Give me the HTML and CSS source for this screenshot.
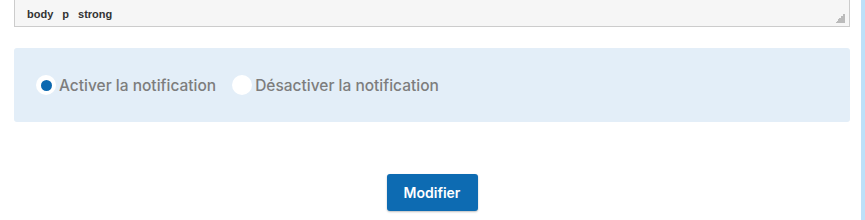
FILE: index.html
```html
<!DOCTYPE html>
<html lang="fr">

<head>
    <meta charset="UTF-8">
    <meta name="viewport" content="width=device-width, initial-scale=1.0">
    <title>Notification</title>
    <link rel="stylesheet" href="styles.css">
</head>

<body>
    <div class="page">
        <div class="content">
            <div class="editor-status">
                <div class="path">
                    <span>body</span>
                    <span>p</span>
                    <span>strong</span>
                </div>
                <div class="grip"></div>
            </div>

            <div class="notif-box">
                <label class="radio">
                    <input type="radio" name="notif" checked>
                    <span class="mark"></span>
                    Activer la notification
                </label>
                <label class="radio">
                    <input type="radio" name="notif">
                    <span class="mark"></span>
                    Désactiver la notification
                </label>
            </div>

            <div class="actions">
                <button class="btn-primary">Modifier</button>
            </div>
        </div>
        <div class="side-strip"></div>
    </div>
</body>

</html>
```

FILE: styles.css
```css
body {
    margin: 0px;
    font-family: Inter, "Noto Sans", sans-serif;
    background: #fff;
}

.page {
    display: flex;
    height: 220px;
}

.content {
    flex: 1;
    padding: 0px 11px 0px 14px;
}

.side-strip {
    width: 4px;
    background-color: #bde0f9;
}

.editor-status {
    display: flex;
    align-items: center;
    justify-content: space-between;
    height: 26px;
    margin-top: -1px;
    padding: 0px 4px 0px 12px;
    background-color: #f6f6f6;
    border: 1px solid #cccccc;
}

.editor-status .path {
    display: flex;
    gap: 9px;
    padding-top: 1px;
    font-family: "Liberation Sans", Arial, sans-serif;
    font-size: 11px;
    font-weight: bold;
    color: #333;
}

.editor-status .grip {
    width: 10px;
    height: 10px;
    margin-top: 10px;
    background: linear-gradient(to bottom right, transparent 50%, #bbbbbb 50%);
}

.notif-box {
    display: flex;
    align-items: center;
    gap: 16px;
    height: 74px;
    margin-top: 21px;
    padding: 0px 22px;
    background-color: #e3eef8;
    border-radius: 3px;
}

.radio {
    display: flex;
    align-items: center;
    gap: 3px;
    font-size: 15.5px;
    font-weight: 500;
    color: #7d7d7d;
    cursor: pointer;
}

.radio input {
    display: none;
}

.radio .mark {
    display: flex;
    align-items: center;
    justify-content: center;
    width: 20px;
    height: 20px;
    border-radius: 50%;
    background-color: #fff;
}

.radio input:checked + .mark::after {
    content: "";
    width: 11px;
    height: 11px;
    border-radius: 50%;
    background-color: #0b68b0;
}

.actions {
    display: flex;
    justify-content: center;
    margin-top: 52px;
}

.btn-primary {
    width: 91px;
    height: 37px;
    border: none;
    border-radius: 3px;
    background-color: #0d6bb2;
    color: #fff;
    font-family: Inter, "Noto Sans", sans-serif;
    font-size: 14px;
    font-weight: 600;
    box-shadow: 0px 1px 2px rgba(0, 0, 0, 0.25);
}
```
